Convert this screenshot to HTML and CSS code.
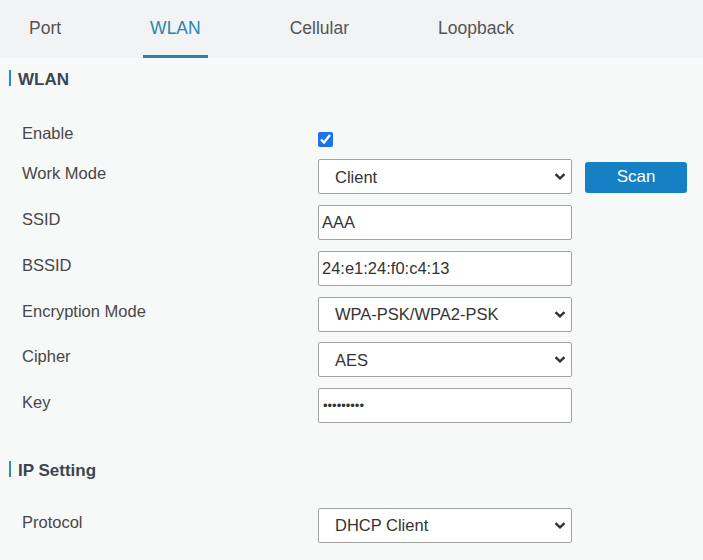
FILE: index.html
```html
<!DOCTYPE html>
<html lang="en">
<head>
    <meta charset="UTF-8">
    <meta name="viewport" content="width=device-width, initial-scale=1.0">
    <title>Interface - WLAN</title>
    <link rel="stylesheet" href="styles.css">
</head>
<body>
    <nav class="tabs">
        <a class="tab">Port</a>
        <a class="tab active">WLAN</a>
        <a class="tab">Cellular</a>
        <a class="tab">Loopback</a>
    </nav>

    <main>
        <h2 class="section-title">WLAN</h2>

        <div class="form">
            <div class="row row-check">
                <label class="label">Enable</label>
                <input type="checkbox" class="check" checked>
            </div>
            <div class="row">
                <label class="label">Work Mode</label>
                <div class="select-wrap">
                    <select><option>Client</option></select>
                    <svg class="chevron" width="12" height="7" viewBox="0 0 12 7"><path d="M1.5 1.2 L6 5.4 L10.5 1.2" fill="none" stroke="#333" stroke-width="2.4"/></svg>
                </div>
                <button class="btn">Scan</button>
            </div>
            <div class="row">
                <label class="label">SSID</label>
                <input type="text" class="field" value="AAA">
            </div>
            <div class="row">
                <label class="label">BSSID</label>
                <input type="text" class="field" value="24:e1:24:f0:c4:13">
            </div>
            <div class="row">
                <label class="label">Encryption Mode</label>
                <div class="select-wrap">
                    <select><option>WPA-PSK/WPA2-PSK</option></select>
                    <svg class="chevron" width="12" height="7" viewBox="0 0 12 7"><path d="M1.5 1.2 L6 5.4 L10.5 1.2" fill="none" stroke="#333" stroke-width="2.4"/></svg>
                </div>
            </div>
            <div class="row">
                <label class="label">Cipher</label>
                <div class="select-wrap">
                    <select><option>AES</option></select>
                    <svg class="chevron" width="12" height="7" viewBox="0 0 12 7"><path d="M1.5 1.2 L6 5.4 L10.5 1.2" fill="none" stroke="#333" stroke-width="2.4"/></svg>
                </div>
            </div>
            <div class="row">
                <label class="label">Key</label>
                <input type="password" class="field field-key" value="123456789">
            </div>
        </div>

        <h2 class="section-title ip-title">IP Setting</h2>

        <div class="form form-ip">
            <div class="row">
                <label class="label">Protocol</label>
                <div class="select-wrap">
                    <select><option>DHCP Client</option></select>
                    <svg class="chevron" width="12" height="7" viewBox="0 0 12 7"><path d="M1.5 1.2 L6 5.4 L10.5 1.2" fill="none" stroke="#333" stroke-width="2.4"/></svg>
                </div>
            </div>
        </div>
    </main>
</body>
</html>
```

FILE: styles.css
```css
body {
    font-family: "Liberation Sans", Arial, sans-serif;
    background-color: #f7f8f8;
    color: #444;
    margin: 0;
    padding: 0;
}

.tabs {
    display: flex;
    gap: 89px;
    height: 58px;
    padding-left: 29px;
    background-color: #f1f3f4;
}

.tab {
    position: relative;
    font-size: 17.5px;
    line-height: 56px;
    color: #555;
    cursor: pointer;
}

.tab.active {
    color: #2a87ad;
}

.tab.active::after {
    content: "";
    position: absolute;
    left: -7px;
    right: -7px;
    bottom: 0;
    height: 3px;
    background-color: #2584ab;
}

.section-title {
    margin: 12px 0 0 9px;
    padding-left: 7px;
    border-left: 2.5px solid #2a8db3;
    height: 16px;
    line-height: 20px;
    font-size: 17px;
    font-weight: bold;
    color: #3b4651;
}

.ip-title {
    margin-top: 38px;
}

.form {
    display: flex;
    flex-direction: column;
    gap: 10.8px;
    margin-top: 32.7px;
    padding-left: 22px;
}

.form-ip {
    margin-top: 30.7px;
}

.row {
    display: flex;
    align-items: flex-start;
    height: 35px;
}

.row-check {
    height: 29.7px;
}

.label {
    width: 296px;
    font-size: 16.5px;
    line-height: 28px;
    color: #474747;
}

.check {
    width: 15px;
    height: 15px;
    margin: 13.5px 0 0 0;
    accent-color: #1a73e8;
}

.field,
.select-wrap select {
    box-sizing: border-box;
    width: 254px;
    height: 35px;
    margin: 0;
    border: 1px solid #a3a3a3;
    border-radius: 2px;
    background: #fff;
    font-family: "Liberation Sans", Arial, sans-serif;
    font-size: 16.5px;
    color: #333;
    outline: none;
}

.field {
    padding: 0 3px;
}

.field-key {
    font-size: 13px;
    padding-left: 4px;
}

.select-wrap {
    position: relative;
}

.select-wrap select {
    appearance: none;
    -webkit-appearance: none;
    padding: 0 30px 0 16px;
}

.chevron {
    position: absolute;
    right: 6px;
    top: 14px;
    pointer-events: none;
}

.btn {
    width: 102px;
    height: 31px;
    margin: 2.7px 0 0 13px;
    border: none;
    border-radius: 3px;
    background-color: #1580c4;
    color: #fff;
    font-family: "Liberation Sans", Arial, sans-serif;
    font-size: 17px;
    cursor: pointer;
}
```
